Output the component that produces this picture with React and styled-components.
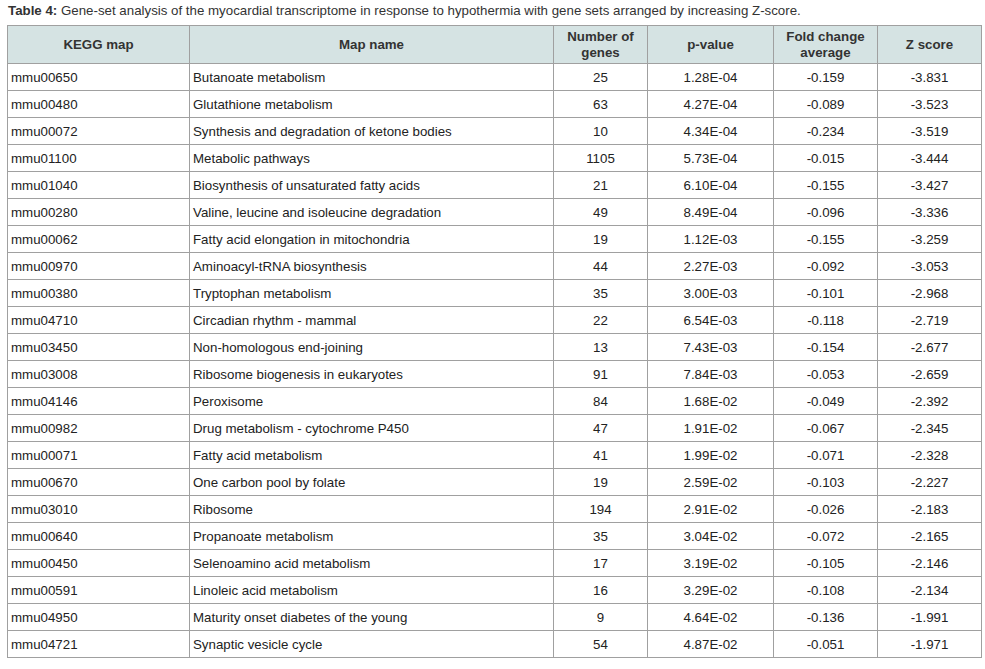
import React from 'react';
import styled, { createGlobalStyle } from 'styled-components';

const GlobalStyle = createGlobalStyle`
  body {
    margin: 0;
    background: #fff;
    font-family: "Liberation Sans", Arial, sans-serif;
  }
`;

const Page = styled.div`
  padding: 3px 5px 0 7px;
`;

const Caption = styled.p`
  margin: 0 0 7px 1px;
  font-size: 13.3px;
  line-height: 15px;
  color: #333;
  b {
    font-weight: bold;
  }
`;

const Table = styled.table`
  border-collapse: collapse;
  table-layout: fixed;
  width: 974px;
  font-size: 13.3px;
  color: #222;
`;

const Head = styled.th`
  background: #d5e3e3;
  border: 1px solid #a0a0a0;
  height: 37px;
  padding: 0 4px;
  font-weight: bold;
  color: #333;
  line-height: 16px;
  text-align: center;
  vertical-align: middle;
`;

const Cell = styled.td`
  border: 1px solid #a0a0a0;
  height: 26px;
  padding: 0 3px;
  text-align: ${(p) => (p.$center ? 'center' : 'left')};
  vertical-align: middle;
  white-space: nowrap;
`;

const columns = [
  { label: 'KEGG map', width: 182 },
  { label: 'Map name', width: 364 },
  { label: ['Number of', 'genes'], width: 94 },
  { label: 'p-value', width: 126 },
  { label: ['Fold change', 'average'], width: 104 },
  { label: 'Z score', width: 104 },
];

const rows = [
  ['mmu00650', 'Butanoate metabolism', '25', '1.28E-04', '-0.159', '-3.831'],
  ['mmu00480', 'Glutathione metabolism', '63', '4.27E-04', '-0.089', '-3.523'],
  ['mmu00072', 'Synthesis and degradation of ketone bodies', '10', '4.34E-04', '-0.234', '-3.519'],
  ['mmu01100', 'Metabolic pathways', '1105', '5.73E-04', '-0.015', '-3.444'],
  ['mmu01040', 'Biosynthesis of unsaturated fatty acids', '21', '6.10E-04', '-0.155', '-3.427'],
  ['mmu00280', 'Valine, leucine and isoleucine degradation', '49', '8.49E-04', '-0.096', '-3.336'],
  ['mmu00062', 'Fatty acid elongation in mitochondria', '19', '1.12E-03', '-0.155', '-3.259'],
  ['mmu00970', 'Aminoacyl-tRNA biosynthesis', '44', '2.27E-03', '-0.092', '-3.053'],
  ['mmu00380', 'Tryptophan metabolism', '35', '3.00E-03', '-0.101', '-2.968'],
  ['mmu04710', 'Circadian rhythm - mammal', '22', '6.54E-03', '-0.118', '-2.719'],
  ['mmu03450', 'Non-homologous end-joining', '13', '7.43E-03', '-0.154', '-2.677'],
  ['mmu03008', 'Ribosome biogenesis in eukaryotes', '91', '7.84E-03', '-0.053', '-2.659'],
  ['mmu04146', 'Peroxisome', '84', '1.68E-02', '-0.049', '-2.392'],
  ['mmu00982', 'Drug metabolism - cytochrome P450', '47', '1.91E-02', '-0.067', '-2.345'],
  ['mmu00071', 'Fatty acid metabolism', '41', '1.99E-02', '-0.071', '-2.328'],
  ['mmu00670', 'One carbon pool by folate', '19', '2.59E-02', '-0.103', '-2.227'],
  ['mmu03010', 'Ribosome', '194', '2.91E-02', '-0.026', '-2.183'],
  ['mmu00640', 'Propanoate metabolism', '35', '3.04E-02', '-0.072', '-2.165'],
  ['mmu00450', 'Selenoamino acid metabolism', '17', '3.19E-02', '-0.105', '-2.146'],
  ['mmu00591', 'Linoleic acid metabolism', '16', '3.29E-02', '-0.108', '-2.134'],
  ['mmu04950', 'Maturity onset diabetes of the young', '9', '4.64E-02', '-0.136', '-1.991'],
  ['mmu04721', 'Synaptic vesicle cycle', '54', '4.87E-02', '-0.051', '-1.971'],
];

export default function App() {
  return (
    <Page>
      <GlobalStyle />
      <Caption>
        <b>Table 4:</b> Gene-set analysis of the myocardial transcriptome in response to hypothermia with gene sets arranged by increasing Z-score.
      </Caption>
      <Table>
        <colgroup>
          {columns.map((c, i) => (
            <col key={i} style={{ width: c.width }} />
          ))}
        </colgroup>
        <thead>
          <tr>
            {columns.map((c, i) => (
              <Head key={i}>
                {Array.isArray(c.label) ? (
                  <>
                    {c.label[0]}
                    <br />
                    {c.label[1]}
                  </>
                ) : (
                  c.label
                )}
              </Head>
            ))}
          </tr>
        </thead>
        <tbody>
          {rows.map((r) => (
            <tr key={r[0]}>
              {r.map((v, i) => (
                <Cell key={i} $center={i > 1}>
                  {v}
                </Cell>
              ))}
            </tr>
          ))}
        </tbody>
      </Table>
    </Page>
  );
}
